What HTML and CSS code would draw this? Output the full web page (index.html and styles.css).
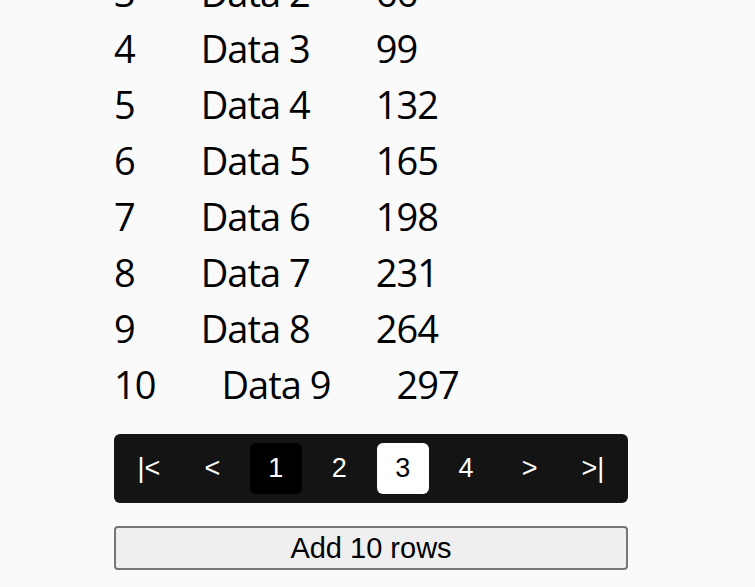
FILE: index.html
```html
<!DOCTYPE html>
<html lang="en">
<head>
    <meta charset="UTF-8">
    <meta name="viewport" content="width=device-width, initial-scale=1.0">
    <title>Paged rows</title>
    <link rel="stylesheet" href="styles.css">
</head>
<body>
    <div class="wrap">
        <div id="rows" class="rows"></div>

        <div class="pager">
            <button class="page">|&lt;</button>
            <button class="page">&lt;</button>
            <button class="page dark">1</button>
            <button class="page">2</button>
            <button class="page current">3</button>
            <button class="page">4</button>
            <button class="page">&gt;</button>
            <button class="page">&gt;|</button>
        </div>

        <button class="add" onclick="addRows()">Add 10 rows</button>
    </div>

    <script>
        let count = 0;

        function addRows() {
            let rows = document.getElementById("rows");
            for (let i = 0; i < 10; i++) {
                count++;
                rows.innerHTML += '<div class="row"><span>' + count + '</span><span>Data ' + (count - 1) +
                    '</span><span>' + ((count - 1) * 33) + '</span></div>';
            }
        }

        addRows();
    </script>
</body>
</html>
```

FILE: styles.css
```css
body {
    margin: 0;
    background-color: #fafafa;
    color: black;
    font-family: "Liberation Sans", Arial, sans-serif;
    overflow: hidden;
}

.wrap {
    width: 514px;
    margin-left: 114px;
}

.rows {
    margin-top: -148px;
    font-family: "Open Sans", sans-serif;
    font-size: 38px;
    line-height: 56px;
    letter-spacing: -1px;
}

.row {
    display: flex;
    gap: 66px;
}

.pager {
    display: flex;
    justify-content: space-between;
    margin-top: 22px;
    padding: 9px;
    background-color: #141414;
    border-radius: 6px;
}

.page {
    width: 52px;
    height: 51px;
    border: none;
    border-radius: 6px;
    background: none;
    color: white;
    font-family: "Liberation Sans", Arial, sans-serif;
    font-size: 27px;
    padding: 0;
    cursor: pointer;
}

.page.dark {
    background-color: black;
}

.page.current {
    background-color: white;
    color: black;
}

.add {
    display: block;
    width: 100%;
    height: 44px;
    margin-top: 23px;
    background-color: #efefef;
    border: 2px solid #767676;
    border-radius: 4px;
    font-family: "Liberation Sans", Arial, sans-serif;
    font-size: 29px;
    padding: 0;
    cursor: pointer;
}
```
